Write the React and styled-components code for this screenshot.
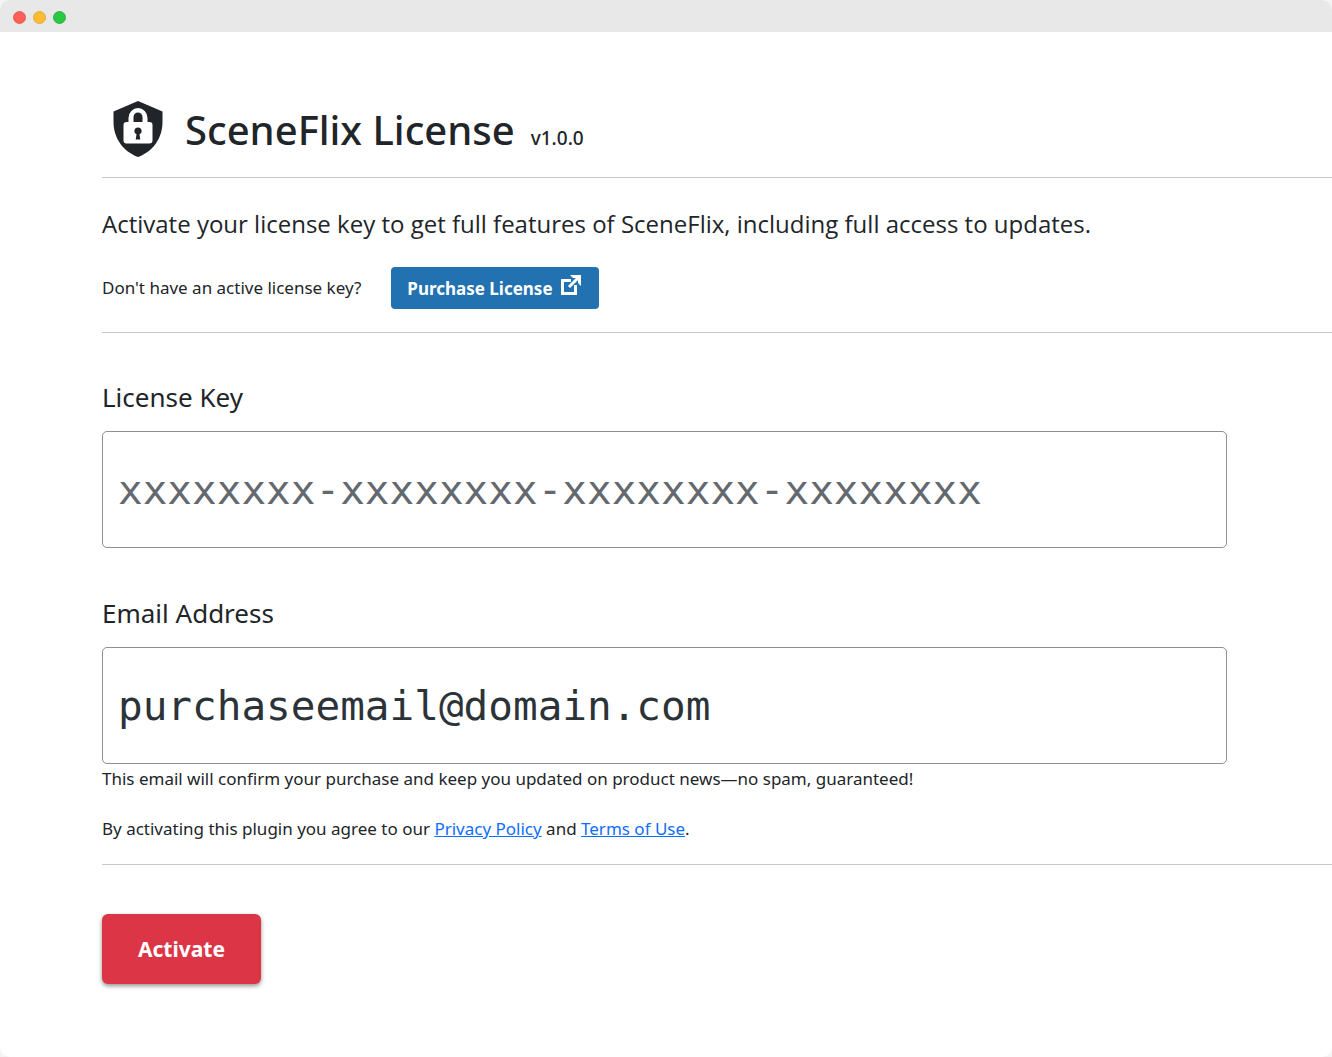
import React from "react";
import styled, { createGlobalStyle } from "styled-components";

const App = () => {
	const [licenseKey, setLicenseKey] = React.useState("");
	const [email, setEmail] = React.useState("purchaseemail@domain.com");

	const onSubmit = (e) => {
		e.preventDefault();
	};

	return (
		<>
			<GlobalStyle />
			<Window>
				<TitleBar>
					<Dot color="#ff5f57" border="#e0625a" />
					<Dot color="#febc2e" border="#dfa849" />
					<Dot color="#28c840" border="#2cb24a" />
				</TitleBar>
				<Content>
					<Header>
						<ShieldLock />
						<Title>SceneFlix License</Title>
						<Version>v1.0.0</Version>
					</Header>
					<Intro>
						<Lead>
							Activate your license key to get full features of
							SceneFlix, including full access to updates.
						</Lead>
						<PurchaseRow>
							<Text>Don't have an active license key?</Text>
							<PurchaseButton type="button">
								Purchase License
								<ExternalIcon />
							</PurchaseButton>
						</PurchaseRow>
					</Intro>
					<form onSubmit={onSubmit}>
						<Fields>
							<Field>
								<Label htmlFor="license-key">License Key</Label>
								<Input
									id="license-key"
									type="text"
									placeholder="xxxxxxxx-xxxxxxxx-xxxxxxxx-xxxxxxxx"
									value={licenseKey}
									onChange={(e) => setLicenseKey(e.target.value)}
								/>
							</Field>
							<Field>
								<Label htmlFor="email">Email Address</Label>
								<Input
									id="email"
									type="email"
									aria-describedby="email-hint"
									value={email}
									onChange={(e) => setEmail(e.target.value)}
								/>
								<Text id="email-hint">
									This email will confirm your purchase and keep
									you updated on product news—no spam, guaranteed!
								</Text>
							</Field>
							<Terms>
								By activating this plugin you agree to our{" "}
								<Link href="#privacy">Privacy Policy</Link> and{" "}
								<Link href="#terms">Terms of Use</Link>.
							</Terms>
						</Fields>
						<ActivateButton type="submit">Activate</ActivateButton>
					</form>
				</Content>
			</Window>
		</>
	);
};

const ShieldLock = () => (
	<Shield viewBox="0 0 50 56" aria-hidden="true">
		<path
			fill="#212529"
			d="M25 0 49.5 10.5V21C49.5 37 40 50.5 25 56 10 50.5.5 37 .5 21V10.5Z"
		/>
		<path
			fill="#fff"
			fillRule="evenodd"
			d="M15.5 21V17a9.5 10 0 0 1 19 0v4H36.5a3 3 0 0 1 3 3v15.500a3 3 0 0 1-3 3h-23a3 3 0 0 1-3-3V24a3 3 0 0 1 3-3ZM20.5 21h9v-5a4.5 4.5 0 0 0-9 0Z"
		/>
		<path
			fill="#212529"
			d="M25 26.5a3.5 3.5 0 0 1 1.5 6.700L27.300 38.500h-4.600L23.500 33.200A3.500 3.500 0 0 1 25 26.500Z"
		/>
	</Shield>
);

const ExternalIcon = () => (
	<External viewBox="0 0 20 20" fill="none" aria-hidden="true">
		<path stroke="#fff" strokeWidth="3" d="M10 5.5H1.5V18.5H14.5V10" />
		<path stroke="#2271b1" strokeWidth="5" d="M7 13 15 5" />
		<path stroke="#fff" strokeWidth="3" d="M8 12 17 3" />
		<path fill="#fff" d="M9 0H20V11L17 8V5.5L14.5 3H12Z" />
	</External>
);

const GlobalStyle = createGlobalStyle`
	*, *::before, *::after {
		box-sizing: border-box;
	}
	body {
		margin: 0;
		background: #f4f4f4;
		color: #212529;
		font-family: "Noto Sans", "Open Sans", sans-serif;
	}
`;

const Window = styled.div`
	min-height: 100vh;
	overflow: hidden;
	border-radius: 10px;
	background: #fff;
`;

const TitleBar = styled.div`
	display: flex;
	align-items: center;
	gap: 7px;
	height: 32px;
	padding: 2px 13px 0;
	background: #e8e8e8;
`;

const Dot = styled.span`
	width: 13px;
	height: 13px;
	border: 1px solid ${({ border }) => border};
	border-radius: 50%;
	background: ${({ color }) => color};
`;

const Content = styled.main`
	padding: 64px 0 64px 102px;
`;

const Header = styled.header`
	display: flex;
	align-items: baseline;
	height: 82px;
	padding-left: 11px;
	border-bottom: 1px solid #c8c9ca;
`;

const Shield = styled.svg`
	flex: none;
	align-self: flex-start;
	width: 50px;
	height: 56px;
	margin: 5px 22px 0 0;
`;

const Title = styled.h1`
	margin: 0 16px 0 0;
	font-weight: 500;
	font-size: 40px;
	line-height: 68px;
`;

const Version = styled.span`
	font-weight: 500;
	font-size: 19px;
`;

const Intro = styled.section`
	padding: 28px 0 23px;
	border-bottom: 1px solid #c8c9ca;
`;

const Lead = styled.p`
	margin: 0;
	font-family: "Open Sans", sans-serif;
	font-size: 24px;
	line-height: 36px;
`;

const PurchaseRow = styled.div`
	display: flex;
	align-items: center;
	gap: 30px;
	margin-top: 25px;
`;

const Text = styled.p`
	margin: 0;
	font-size: 17px;
	line-height: 30px;
`;

const PurchaseButton = styled.button`
	display: flex;
	align-items: center;
	gap: 8px;
	height: 42px;
	padding: 0 18px 0 16px;
	border: 0;
	border-radius: 4px;
	background: #2271b1;
	color: #fff;
	font-family: inherit;
	font-weight: 700;
	font-size: 17px;
	cursor: pointer;
`;

const External = styled.svg`
	width: 20px;
	height: 20px;
	margin-bottom: 6px;
`;

const Fields = styled.div`
	display: flex;
	flex-direction: column;
	padding: 44px 0 20px;
	border-bottom: 1px solid #c8c9ca;
`;

const Field = styled.div`
	margin: 0 105px 0 0;
	& + & {
		margin-top: 45px;
	}
`;

const Label = styled.label`
	display: block;
	margin-bottom: 14px;
	font-size: 26px;
	line-height: 40px;
`;

const Input = styled.input`
	display: block;
	width: 100%;
	height: 117px;
	padding: 0 15px;
	border: 1px solid #8c8f94;
	border-radius: 5px;
	background: #fff;
	color: #2c3338;
	font-family: "DejaVu Sans Mono", monospace;
	font-size: 41px;
	&::placeholder {
		color: #646970;
		opacity: 1;
	}
`;

const Terms = styled(Text)`
	margin-top: 20px;
`;

const Link = styled.a`
	color: #0d6efd;
`;

const ActivateButton = styled.button`
	height: 70px;
	margin-top: 49px;
	padding: 0 36px;
	border: 0;
	border-radius: 6px;
	background: #dc3545;
	box-shadow: 0 2px 4px rgba(33, 37, 41, 0.5);
	color: #fff;
	font-family: inherit;
	font-weight: 700;
	font-size: 21px;
	cursor: pointer;
`;

export default App;
